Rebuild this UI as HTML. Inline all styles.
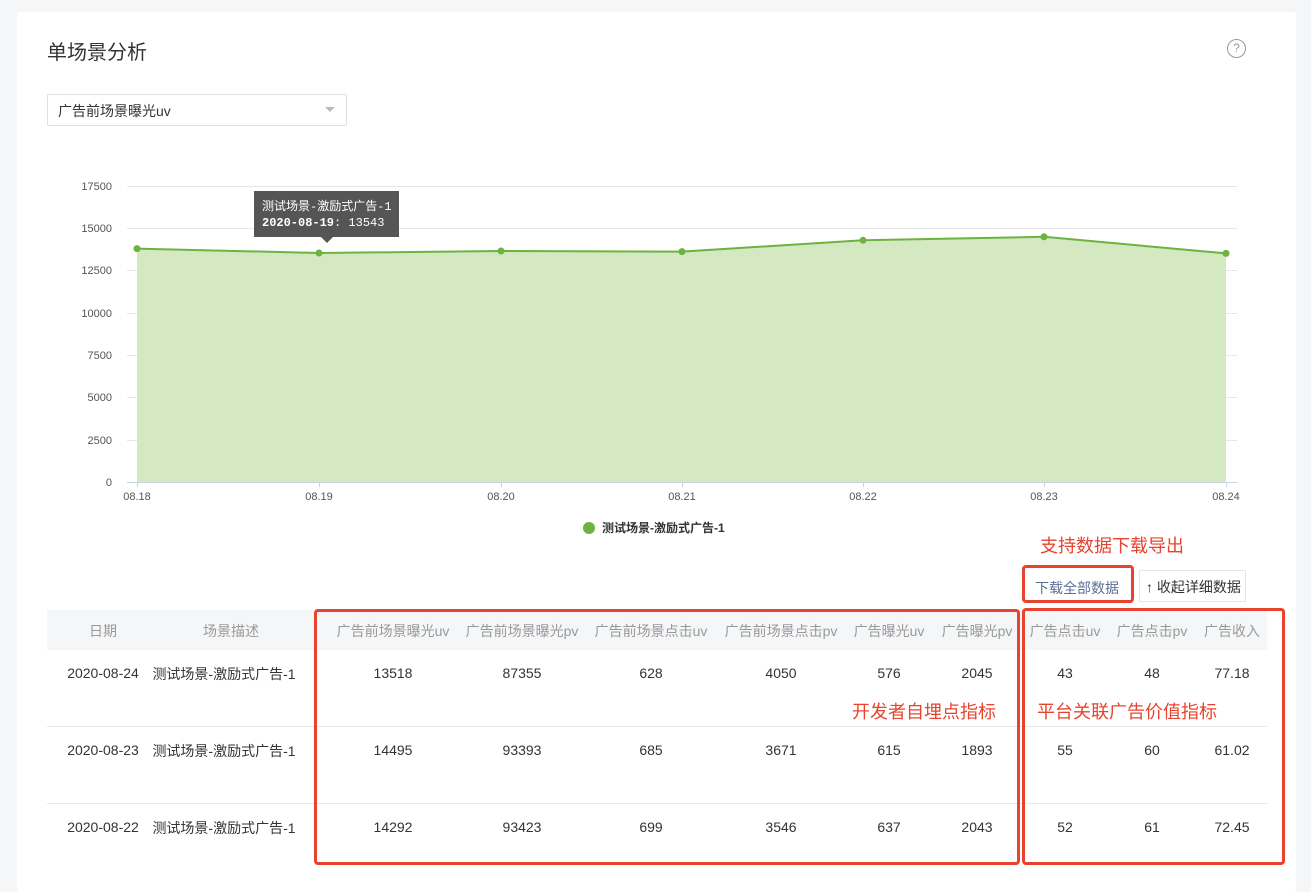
<!DOCTYPE html>
<html><head><meta charset="utf-8"><style>
body{margin:0;width:1311px;height:879px;background:#f5f6f8;font-family:"Liberation Sans","Noto Sans CJK SC",sans-serif;position:relative;overflow:hidden}
.card{position:absolute;left:17px;top:12px;width:1279px;height:880px;background:#fff;border-radius:3px}
.a{position:absolute;white-space:nowrap}
.hd{position:absolute;top:610px;left:47px;width:1220px;height:40px;background:#f5f6f8}
.th{position:absolute;top:621px;font-size:14px;color:#999;transform:translateX(-50%)}
.td{position:absolute;font-size:14px;color:#333;transform:translateX(-50%)}
.sep{position:absolute;left:47px;width:1220px;height:1px;background:#e8e8e8}
.red{position:absolute;border:3px solid #e8432e;border-radius:4px;box-sizing:border-box}
.rt{position:absolute;color:#e8432e;font-size:18px;white-space:nowrap}
</style></head><body>
<div class="card"></div>
<div class="a" style="left:47px;top:36px;font-size:20px;color:#333">单场景分析</div>
<div class="a" style="left:1227px;top:39px;width:17px;height:17px;border:1px solid #999;border-radius:50%;font-size:12px;color:#999;text-align:center;line-height:17px">?</div>
<div class="a" style="left:47px;top:94px;width:298px;height:30px;border:1px solid #e0e0e0;border-radius:2px"></div>
<div class="a" style="left:58px;top:101px;font-size:14px;color:#333">广告前场景曝光uv</div>
<div class="a" style="left:325px;top:107px;width:0;height:0;border-left:5px solid transparent;border-right:5px solid transparent;border-top:5px solid #bbb"></div>
<svg class="a" style="left:0;top:0" width="1311" height="560">
<g stroke="#e6e6e6" stroke-width="1">
<line x1="127" x2="1237" y1="186.5" y2="186.5"/><line x1="127" x2="1237" y1="228.5" y2="228.5"/><line x1="127" x2="1237" y1="270.5" y2="270.5"/><line x1="127" x2="1237" y1="313.5" y2="313.5"/><line x1="127" x2="1237" y1="355.5" y2="355.5"/><line x1="127" x2="1237" y1="397.5" y2="397.5"/><line x1="127" x2="1237" y1="440.5" y2="440.5"/></g>
<line x1="127" x2="1237" y1="482.5" y2="482.5" stroke="#c9d3e6"/>
<g stroke="#c9d3e6"><line x1="137.5" x2="137.5" y1="482" y2="487"/><line x1="319.5" x2="319.5" y1="482" y2="487"/><line x1="501.5" x2="501.5" y1="482" y2="487"/><line x1="682.5" x2="682.5" y1="482" y2="487"/><line x1="863.5" x2="863.5" y1="482" y2="487"/><line x1="1044.5" x2="1044.5" y1="482" y2="487"/><line x1="1226.5" x2="1226.5" y1="482" y2="487"/></g>
<path d="M137 248.6L319 253L501 251L682 251.6L863 240.3L1044 236.8L1226 253.4L1226 482L137 482Z" fill="#d4e8c2"/>
<path d="M137 248.6L319 253L501 251L682 251.6L863 240.3L1044 236.8L1226 253.4" fill="none" stroke="#6db33f" stroke-width="2"/>
<g fill="#6db33f"><circle cx="137" cy="248.6" r="3.5"/><circle cx="319" cy="253" r="3.5"/><circle cx="501" cy="251" r="3.5"/><circle cx="682" cy="251.6" r="3.5"/><circle cx="863" cy="240.3" r="3.5"/><circle cx="1044" cy="236.8" r="3.5"/><circle cx="1226" cy="253.4" r="3.5"/></g>
<g font-size="11" fill="#555" text-anchor="end" font-family="Liberation Sans"><text x="112" y="190">17500</text><text x="112" y="232">15000</text><text x="112" y="274">12500</text><text x="112" y="317">10000</text><text x="112" y="359">7500</text><text x="112" y="401">5000</text><text x="112" y="444">2500</text><text x="112" y="486">0</text></g>
<g font-size="11" fill="#555" text-anchor="middle" font-family="Liberation Sans"><text x="137" y="500">08.18</text><text x="319" y="500">08.19</text><text x="501" y="500">08.20</text><text x="682" y="500">08.21</text><text x="863" y="500">08.22</text><text x="1044" y="500">08.23</text><text x="1226" y="500">08.24</text></g>
<rect x="254" y="191" width="145" height="46" fill="#555"/><path d="M321 237l6 6 6-6z" fill="#555"/>
<text x="262" y="210" font-size="12" fill="#fff" font-family="Liberation Mono,Noto Sans CJK SC,monospace">测试场景-激励式广告-1</text>
<text x="262" y="226" font-size="12" fill="#fff" font-family="Liberation Mono,Noto Sans CJK SC,monospace"><tspan font-weight="bold">2020-08-19</tspan>: 13543</text>
<circle cx="589" cy="528" r="6" fill="#6db33f"/>
<text x="602" y="532" font-size="12" font-weight="bold" fill="#333" font-family="Liberation Sans,Noto Sans CJK SC,sans-serif">测试场景-激励式广告-1</text>
</svg>
<div class="rt" style="left:1040px;top:532px">支持数据下载导出</div>
<div class="a" style="left:1035px;top:578px;font-size:14px;color:#5c6f94">下载全部数据</div>
<div class="a" style="left:1139px;top:570px;width:107px;height:32px;border:1px solid #e6e6e6;box-sizing:border-box"></div>
<div class="a" style="left:1146px;top:577px;font-size:14px;color:#333">↑ 收起详细数据</div>
<div class="hd"></div>
<div class="th" style="left:103px">日期</div><div class="th" style="left:231px">场景描述</div><div class="th" style="left:393px">广告前场景曝光uv</div><div class="th" style="left:522px">广告前场景曝光pv</div><div class="th" style="left:651px">广告前场景点击uv</div><div class="th" style="left:781px">广告前场景点击pv</div><div class="th" style="left:889px">广告曝光uv</div><div class="th" style="left:977px">广告曝光pv</div><div class="th" style="left:1065px">广告点击uv</div><div class="th" style="left:1152px">广告点击pv</div><div class="th" style="left:1232px">广告收入</div>
<div class="sep" style="top:726px"></div><div class="sep" style="top:803px"></div>
<div style="position:absolute;top:665px;left:0;width:1311px">
<div class="td" style="left:103px">2020-08-24</div><div class="td" style="left:224px;top:-1px">测试场景-激励式广告-1</div><div class="td" style="left:393px">13518</div><div class="td" style="left:522px">87355</div><div class="td" style="left:651px">628</div><div class="td" style="left:781px">4050</div><div class="td" style="left:889px">576</div><div class="td" style="left:977px">2045</div><div class="td" style="left:1065px">43</div><div class="td" style="left:1152px">48</div><div class="td" style="left:1232px">77.18</div></div>
<div style="position:absolute;top:742px;left:0;width:1311px">
<div class="td" style="left:103px">2020-08-23</div><div class="td" style="left:224px;top:-1px">测试场景-激励式广告-1</div><div class="td" style="left:393px">14495</div><div class="td" style="left:522px">93393</div><div class="td" style="left:651px">685</div><div class="td" style="left:781px">3671</div><div class="td" style="left:889px">615</div><div class="td" style="left:977px">1893</div><div class="td" style="left:1065px">55</div><div class="td" style="left:1152px">60</div><div class="td" style="left:1232px">61.02</div></div>
<div style="position:absolute;top:819px;left:0;width:1311px">
<div class="td" style="left:103px">2020-08-22</div><div class="td" style="left:224px;top:-1px">测试场景-激励式广告-1</div><div class="td" style="left:393px">14292</div><div class="td" style="left:522px">93423</div><div class="td" style="left:651px">699</div><div class="td" style="left:781px">3546</div><div class="td" style="left:889px">637</div><div class="td" style="left:977px">2043</div><div class="td" style="left:1065px">52</div><div class="td" style="left:1152px">61</div><div class="td" style="left:1232px">72.45</div></div>
<div class="red" style="left:314px;top:609px;width:706px;height:256px"></div>
<div class="red" style="left:1022px;top:608px;width:263px;height:257px"></div>
<div class="red" style="left:1022px;top:565px;width:112px;height:38px"></div>
<div class="rt" style="left:852px;top:698px">开发者自埋点指标</div>
<div class="rt" style="left:1037px;top:698px">平台关联广告价值指标</div>
</body></html>
